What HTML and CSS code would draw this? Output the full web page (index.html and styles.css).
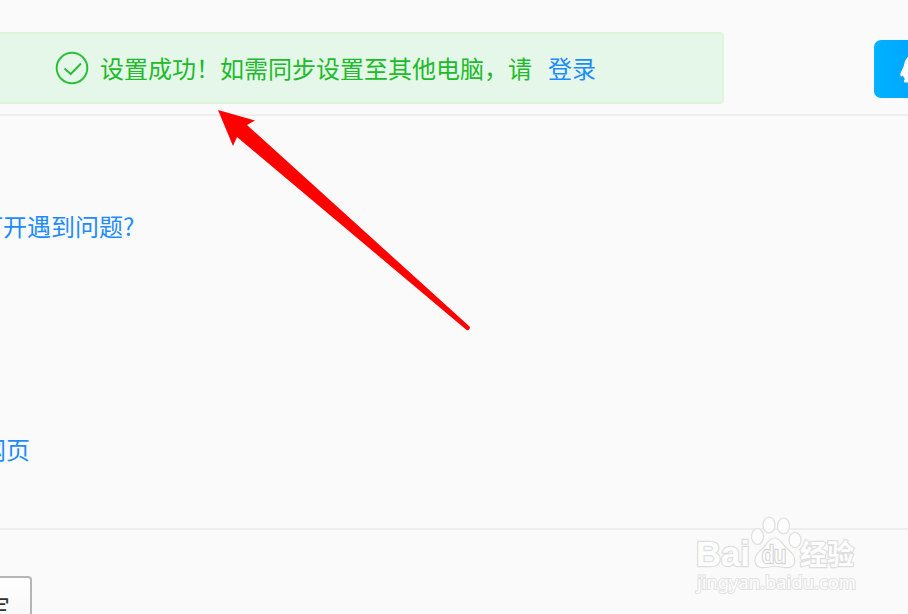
FILE: index.html
```
<!DOCTYPE html>
<html lang="zh-CN">
<head>
    <meta charset="UTF-8">
    <meta name="viewport" content="width=device-width, initial-scale=1.0">
    <title>设置</title>
    <link rel="stylesheet" href="styles.css">
</head>
<body>
    <header class="header">
        <div class="notice">
            <svg class="notice-icon" viewBox="0 0 34 34" fill="none" stroke="#2bc03a" stroke-width="2">
                <circle cx="17" cy="17" r="15.3"/>
                <path d="M9.5 17.5l6.2 5.500L26 12.5"/>
            </svg>
            <span class="notice-text">设置成功！如需同步设置至其他电脑，请</span>
            <a class="link" href="#">登录</a>
        </div>
        <button class="bell-btn" type="button">
            <svg class="bell" viewBox="0 0 36 32" fill="#fff">
                <path d="M18 0C10 0 5 5 4 12C3.500 15 1 18 .4 21C0 24 1.500 24 3 22.500C3.500 24 4 25 5 26C3.500 27 3.500 29 5 29.500H31C33 29 33 27 31 26C33 25 34 22 36 24C36 19 32 16 32 12C31 5 26 0 18 0Z"/>
            </svg>
        </button>
    </header>

    <main class="content">
        <a class="link help" href="#">打开遇到问题?</a>
        <a class="link page" href="#">网页</a>
    </main>

    <footer class="footer">
        <button class="set-btn" type="button">设定</button>
    </footer>

    <svg class="arrow" viewBox="0 0 254 222">
        <path d="M0 0L37 10.500L29 15L251 216A2 2 0 0 1 248 219.500L19 27L15 36Z" fill="#f00"/>
    </svg>

    <svg class="watermark" viewBox="0 0 170 84">
        <g class="outline">
            <text class="brand" x="6" y="56" textLength="54" lengthAdjust="spacingAndGlyphs">Bai</text>
            <ellipse cx="67.500" cy="26.500" rx="6" ry="8"/>
            <ellipse cx="79" cy="15" rx="6" ry="8"/>
            <ellipse cx="93.500" cy="16" rx="6" ry="8"/>
            <ellipse cx="105" cy="30" rx="6" ry="7.500"/>
            <path d="M84.500 28C79 28 77 34 72 39C67 43 64 47 65 52C67 59 73 58 79 57C83 56 87 56 91 57C97 58 102 59 104.500 53C106 47 102 43 97.500 39C92 34 90 28 84.500 28Z"/>
            <text class="du" x="72" y="53" textLength="24" lengthAdjust="spacingAndGlyphs">du</text>
            <text class="cn" x="110" y="54.500" textLength="54" lengthAdjust="spacingAndGlyphs">经验</text>
            <text class="url" x="7" y="78.500" textLength="159" lengthAdjust="spacingAndGlyphs">jingyan.baidu.com</text>
        </g>
    </svg>
</body>
</html>
```
FILE: styles.css
```
* {
    box-sizing: border-box;
}
body {
    margin: 0;
    height: 614px;
    overflow: hidden;
    position: relative;
    background: #fafafa;
    font-family: "Noto Sans CJK SC", sans-serif;
    font-size: 24px;
    line-height: 32px;
}
.header {
    display: flex;
    justify-content: space-between;
    height: 116px;
    padding-top: 32px;
    border-bottom: 2px solid #eeeeee;
}
.notice {
    display: flex;
    align-items: center;
    width: 724px;
    height: 72px;
    padding-left: 55px;
    background: #e5f7e8;
    border: 2px solid #dff5da;
    border-left: 0;
    border-radius: 0 4px 4px 0;
}
.notice-icon {
    width: 34px;
    height: 34px;
    margin-right: 11px;
}
.notice-text {
    margin-right: 16px;
    color: #20bb2a;
    white-space: nowrap;
}
.link {
    color: #1e8cff;
    text-decoration: none;
    white-space: nowrap;
}
.bell-btn {
    flex: none;
    width: 34px;
    height: 58px;
    margin-top: 8px;
    padding: 0 0 0 26px;
    overflow: hidden;
    border: 0;
    border-radius: 7px 0 0 7px;
    background: linear-gradient(90deg, #00b2ff, #00a8ff);
}
.bell {
    display: block;
    width: 36px;
    height: 32px;
}
.content {
    display: flex;
    flex-direction: column;
    align-items: flex-start;
    height: 414px;
    padding-top: 94px;
    border-bottom: 2px solid #eeeeee;
}
.help {
    margin-left: -21px;
}
.page {
    margin-top: 191px;
    margin-left: -18px;
}
.footer {
    padding-top: 46px;
}
.set-btn {
    width: 72px;
    height: 60px;
    margin-left: -40px;
    padding: 0 22px 0 0;
    border: 2px solid #b5b5b5;
    border-radius: 4px;
    background: linear-gradient(#ffffff, #f4f4f4);
    color: #333;
    font: inherit;
    text-align: right;
    white-space: nowrap;
}
.arrow {
    position: absolute;
    left: 218px;
    top: 110px;
    width: 254px;
    height: 222px;
}
.watermark {
    position: absolute;
    left: 690px;
    top: 510px;
    width: 170px;
    height: 84px;
}
.outline {
    fill: #fdfdfd;
    stroke: #dedede;
    stroke-width: 1.2px;
    font-weight: bold;
}
.outline text {
    paint-order: stroke;
    stroke-width: 2.4px;
}
.brand {
    font-family: "Liberation Sans", sans-serif;
    font-size: 35px;
}
.outline .du {
    font-family: "Liberation Sans", sans-serif;
    font-size: 23px;
    font-weight: normal;
    stroke: #d4d4d4;
}
.cn {
    font-size: 28px;
}
.outline .url {
    font-family: "Noto Sans", sans-serif;
    font-size: 18px;
    font-weight: normal;
    stroke: #e2e2e2;
    stroke-width: 2px;
}
```
